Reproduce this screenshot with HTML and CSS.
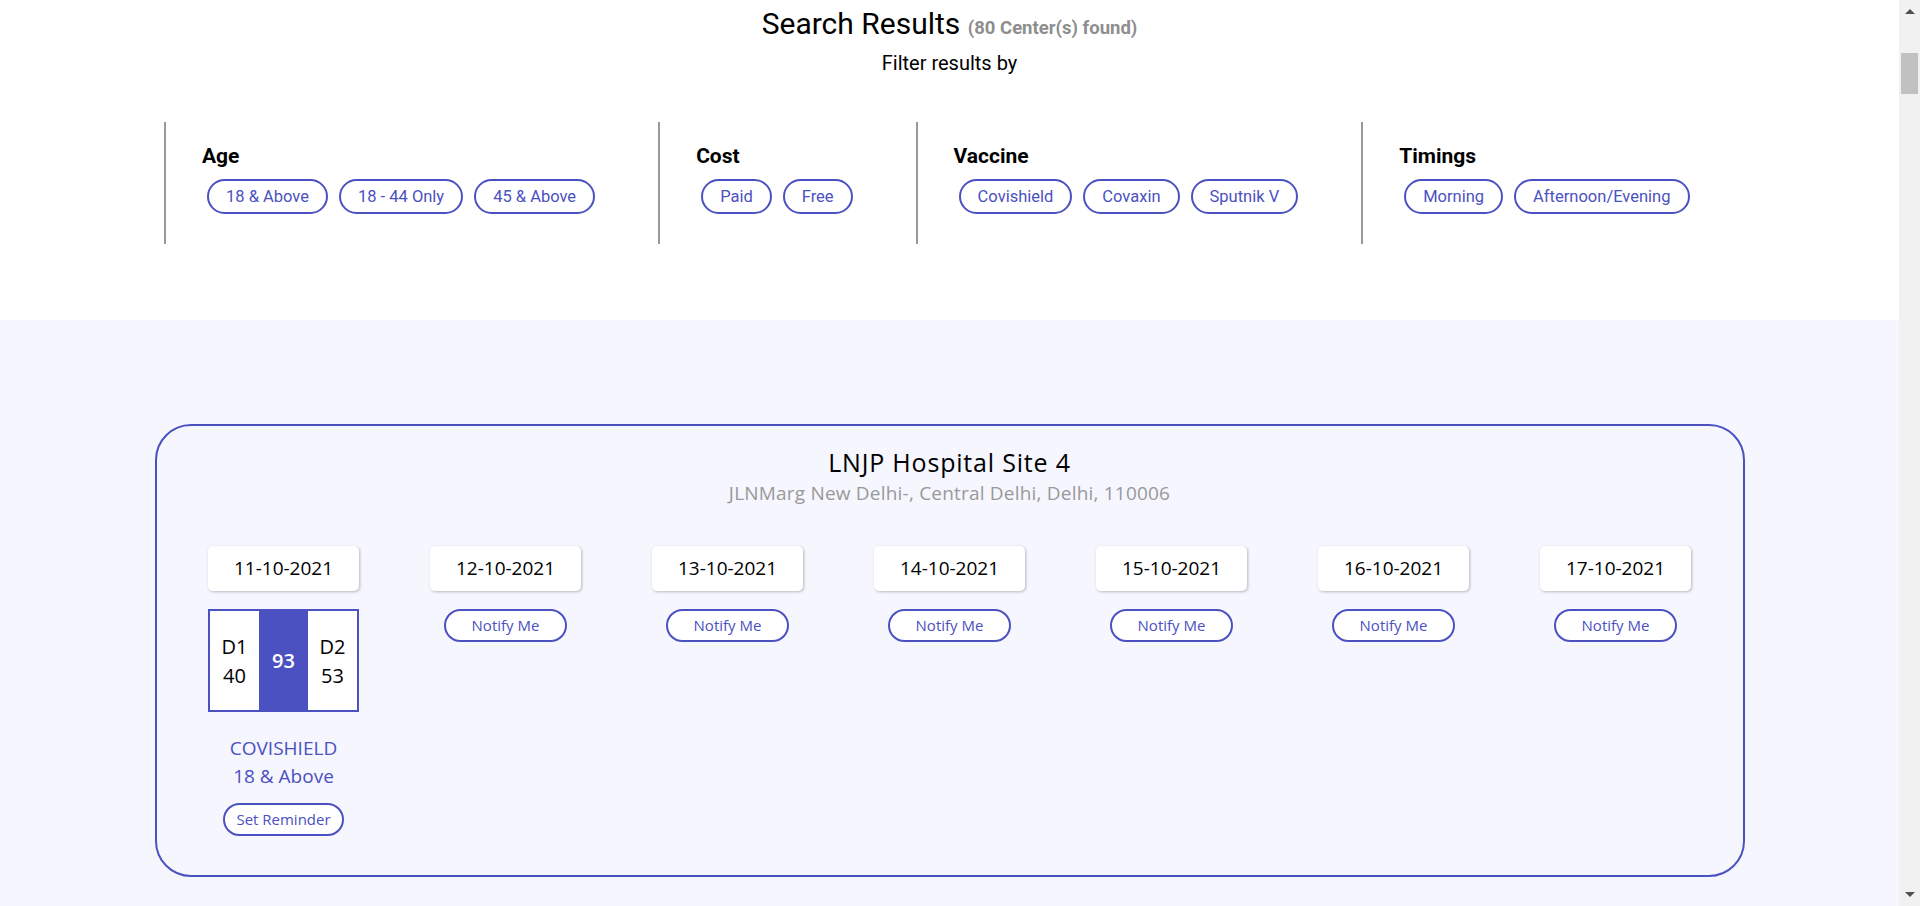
FILE: index.html
```html
<!DOCTYPE html>
<html lang="en">
<head>
<meta charset="utf-8">
<title>Search Results</title>
<link rel="stylesheet" href="styles.css">
</head>
<body>
<main class="page">
  <section class="filters-section">
    <h1 class="title">Search Results <span class="count">(80 Center(s) found)</span></h1>
    <p class="filter-label">Filter results by</p>
    <div class="filters">
      <div class="filter-group">
        <h3 class="filter-title">Age</h3>
        <div class="chips">
          <button class="chip">18 &amp; Above</button>
          <button class="chip">18 - 44 Only</button>
          <button class="chip">45 &amp; Above</button>
        </div>
      </div>
      <div class="filter-group">
        <h3 class="filter-title">Cost</h3>
        <div class="chips">
          <button class="chip">Paid</button>
          <button class="chip">Free</button>
        </div>
      </div>
      <div class="filter-group">
        <h3 class="filter-title">Vaccine</h3>
        <div class="chips">
          <button class="chip">Covishield</button>
          <button class="chip">Covaxin</button>
          <button class="chip">Sputnik V</button>
        </div>
      </div>
      <div class="filter-group">
        <h3 class="filter-title">Timings</h3>
        <div class="chips">
          <button class="chip">Morning</button>
          <button class="chip">Afternoon/Evening</button>
        </div>
      </div>
    </div>
  </section>

  <section class="results">
    <article class="center-card">
      <h2 class="center-name">LNJP Hospital Site 4</h2>
      <p class="center-address">JLNMarg New Delhi-, Central Delhi, Delhi, 110006</p>
      <div class="days">
        <div class="day">
          <div class="date">11-10-2021</div>
          <div class="slot">
            <div class="dose">D1<br>40</div>
            <div class="total">93</div>
            <div class="dose">D2<br>53</div>
          </div>
          <div class="vaccine">COVISHIELD<br>18 &amp; Above</div>
          <button class="btn-outline btn-reminder">Set Reminder</button>
        </div>
        <div class="day">
          <div class="date">12-10-2021</div>
          <button class="btn-outline btn-notify">Notify Me</button>
        </div>
        <div class="day">
          <div class="date">13-10-2021</div>
          <button class="btn-outline btn-notify">Notify Me</button>
        </div>
        <div class="day">
          <div class="date">14-10-2021</div>
          <button class="btn-outline btn-notify">Notify Me</button>
        </div>
        <div class="day">
          <div class="date">15-10-2021</div>
          <button class="btn-outline btn-notify">Notify Me</button>
        </div>
        <div class="day">
          <div class="date">16-10-2021</div>
          <button class="btn-outline btn-notify">Notify Me</button>
        </div>
        <div class="day">
          <div class="date">17-10-2021</div>
          <button class="btn-outline btn-notify">Notify Me</button>
        </div>
      </div>
    </article>
  </section>
</main>

<div class="scrollbar" aria-hidden="true">
  <div class="sb-button"><span class="sb-arrow-up"></span></div>
  <div class="sb-track"><div class="sb-thumb"></div></div>
  <div class="sb-button"><span class="sb-arrow-down"></span></div>
</div>
</body>
</html>
```

FILE: styles.css
```css
html,
body {
  height: 100%;
}

body {
  margin: 0;
  display: flex;
  overflow: hidden;
  font-family: Roboto, "Liberation Sans", sans-serif;
  color: #000;
  background: #f5f6fe;
}

.page {
  flex: 1;
  min-width: 0;
  overflow: hidden;
}

/* ---------- browser-like scrollbar strip ---------- */
.scrollbar {
  flex: none;
  width: 21px;
  display: flex;
  flex-direction: column;
  background: #f1f1f1;
}

.sb-button {
  height: 21px;
  display: flex;
  align-items: center;
  justify-content: center;
}

.sb-arrow-up {
  width: 0;
  height: 0;
  border-left: 5px solid transparent;
  border-right: 5px solid transparent;
  border-bottom: 5px solid #505050;
  margin-top: 2px;
}

.sb-arrow-down {
  width: 0;
  height: 0;
  border-left: 5px solid transparent;
  border-right: 5px solid transparent;
  border-top: 5px solid #505050;
  margin-bottom: 2px;
}

.sb-track {
  flex: 1;
  padding: 32px 2px 0;
}

.sb-thumb {
  height: 41px;
  background: #c1c1c1;
}

/* ---------- filters ---------- */
.filters-section {
  background: #fff;
  padding-bottom: 76px;
  text-align: center;
}

.title {
  margin: 0;
  padding-top: 4px;
  font-size: 30px;
  line-height: 40px;
  font-weight: 400;
}

.count {
  font-size: 18.5px;
  line-height: 20px;
  font-weight: 700;
  color: #8e8e8e;
}

.filter-label {
  margin: 7px 0 0;
  font-size: 20px;
  line-height: 24px;
}

.filters {
  display: flex;
  margin-top: 47px;
  padding-left: 164px;
  text-align: left;
}

.filter-group {
  border-left: 2px solid #999;
  padding: 22px 63px 30px 36px;
}

.filter-title {
  margin: 0;
  font-size: 21px;
  line-height: 25px;
  font-weight: 700;
}

.chips {
  display: flex;
  gap: 11px;
  margin: 10px 0 0 5px;
}

.chip {
  font-family: Roboto, "Liberation Sans", sans-serif;
  font-size: 16.5px;
  line-height: 21px;
  padding: 5px 17px;
  color: #4b51c1;
  background: #fff;
  border: 2px solid #4b51c1;
  border-radius: 18px;
  white-space: nowrap;
}

/* ---------- results ---------- */
.results {
  background: #f5f6fe;
  padding: 104px 0 40px;
  font-family: "Open Sans", "Noto Sans", sans-serif;
}

.center-card {
  width: 1590px;
  box-sizing: border-box;
  margin: 0 auto;
  border: 2px solid #4b51c1;
  border-radius: 36px;
  padding: 20px 16px 39px;
  text-align: center;
}

.center-name {
  margin: 0;
  font-size: 25px;
  line-height: 32px;
  font-weight: 500;
  letter-spacing: 0.8px;
}

.center-address {
  margin: 2px 0 0;
  font-size: 19px;
  line-height: 26px;
  color: #999;
  letter-spacing: 0.2px;
}

.days {
  display: grid;
  grid-template-columns: repeat(7, 1fr);
  margin-top: 40px;
}

.day {
  display: flex;
  flex-direction: column;
  align-items: center;
}

.date {
  width: 151px;
  height: 45px;
  line-height: 45px;
  background: #fff;
  border-radius: 5px;
  box-shadow: 1px 1px 3px rgba(0, 0, 0, 0.25);
  font-size: 19px;
  margin-bottom: 18px;
}

.slot {
  width: 151px;
  height: 103px;
  box-sizing: border-box;
  border: 2px solid #4b51c1;
  display: grid;
  grid-template-columns: repeat(3, 1fr);
  background: #fff;
}

.dose,
.total {
  display: flex;
  align-items: center;
  justify-content: center;
  font-size: 20px;
  line-height: 29px;
}

.total {
  background: #4b51c1;
  color: #fff;
  font-weight: 600;
}

.vaccine {
  margin-top: 22px;
  font-size: 19px;
  line-height: 28px;
  color: #4b51c1;
}

.btn-outline {
  font-family: "Open Sans", "Noto Sans", sans-serif;
  height: 33px;
  font-size: 15px;
  line-height: 29px;
  color: #4b51c1;
  background: #fff;
  border: 2px solid #4b51c1;
  border-radius: 17px;
  white-space: nowrap;
}

.btn-notify {
  padding: 0 26px;
}

.btn-reminder {
  margin-top: 13px;
  padding: 0 11px;
}
```
